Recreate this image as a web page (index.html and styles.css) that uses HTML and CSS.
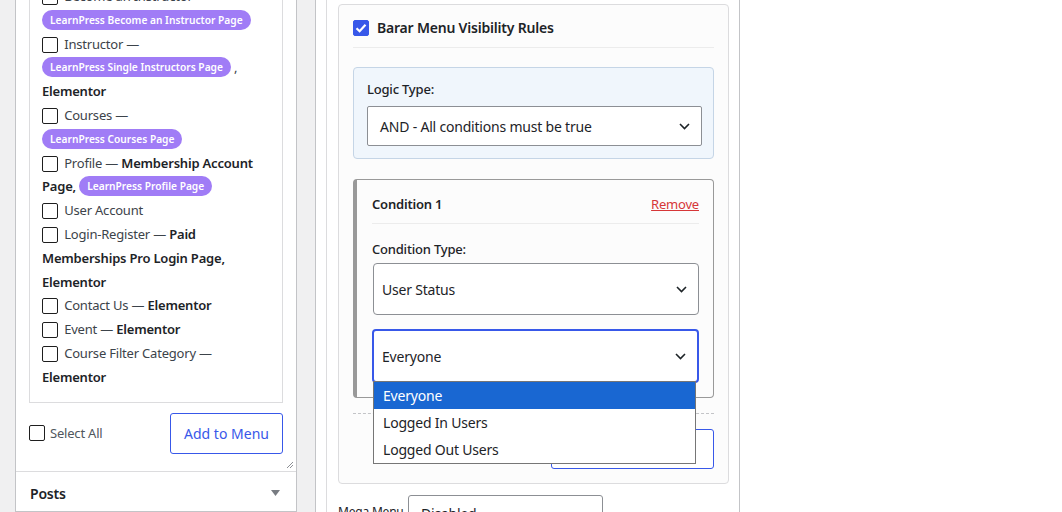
FILE: index.html
```html
<!DOCTYPE html>
<html lang="en">
<head>
  <meta charset="UTF-8">
  <title>Menus</title>
  <link rel="stylesheet" href="styles.css">
</head>
<body>
  <div class="screen">
    <aside class="side">
      <div class="side-section">
        <div class="page-list">
          <div class="page-item"><span class="box"></span> Become an Instructor —<br><span class="tag">LearnPress Become an Instructor Page</span></div>
          <div class="page-item"><span class="box"></span> Instructor —<br><span class="tag">LearnPress Single Instructors Page</span> ,<br><b>Elementor</b></div>
          <div class="page-item"><span class="box"></span> Courses —<br><span class="tag">LearnPress Courses Page</span></div>
          <div class="page-item"><span class="box"></span> Profile — <b>Membership Account<br>Page,</b> <span class="tag">LearnPress Profile Page</span></div>
          <div class="page-item"><span class="box"></span> User Account</div>
          <div class="page-item"><span class="box"></span> Login-Register — <b>Paid<br>Memberships Pro Login Page,<br>Elementor</b></div>
          <div class="page-item"><span class="box"></span> Contact Us — <b>Elementor</b></div>
          <div class="page-item"><span class="box"></span> Event — <b>Elementor</b></div>
          <div class="page-item"><span class="box"></span> Course Filter Category —<br><b>Elementor</b></div>
        </div>
        <div class="side-actions">
          <label class="select-all"><span class="box"></span> Select All</label>
          <button class="btn-outline add-menu">Add to Menu</button>
        </div>
        <svg class="grip" width="8" height="8" viewBox="0 0 8 8" aria-hidden="true">
          <path d="M1 7L7 1M4 7L7 4" stroke="#8c8f94" stroke-width="1"/>
        </svg>
      </div>
      <div class="side-head">
        <span>Posts</span>
        <svg width="9" height="6" viewBox="0 0 9 6" aria-hidden="true"><path d="M0 0H9L4.5 6Z" fill="#787c82"/></svg>
      </div>
    </aside>

    <main class="main">
      <div class="item-settings">
        <section class="rules-card">
          <header class="rules-head">
            <span class="box checked">
              <svg width="12" height="10" viewBox="0 0 12 10" aria-hidden="true"><path d="M1.5 5.2L4.6 8.2L10.5 1.8" fill="none" stroke="#fff" stroke-width="2.2"/></svg>
            </span>
            <span class="rules-title">Barar Menu Visibility Rules</span>
          </header>

          <div class="logic-box">
            <div class="field-label">Logic Type:</div>
            <div class="select logic-select">
              <span>AND - All conditions must be true</span>
              <svg class="chev" width="11" height="7" viewBox="0 0 11 7" aria-hidden="true"><path d="M1 1L5.5 5.5L10 1" fill="none" stroke="#1d2327" stroke-width="1.6"/></svg>
            </div>
          </div>

          <div class="condition">
            <div class="condition-head">
              <span class="condition-title">Condition 1</span>
              <a class="remove" href="#">Remove</a>
            </div>
            <div class="field-label cond-label">Condition Type:</div>
            <div class="select tall">
              <span>User Status</span>
              <svg class="chev" width="11" height="7" viewBox="0 0 11 7" aria-hidden="true"><path d="M1 1L5.5 5.5L10 1" fill="none" stroke="#1d2327" stroke-width="1.6"/></svg>
            </div>
            <div class="select tall focused">
              <span>Everyone</span>
              <svg class="chev" width="11" height="7" viewBox="0 0 11 7" aria-hidden="true"><path d="M1 1L5.5 5.5L10 1" fill="none" stroke="#1d2327" stroke-width="1.6"/></svg>
              <ul class="options">
                <li class="active">Everyone</li>
                <li>Logged In Users</li>
                <li>Logged Out Users</li>
              </ul>
            </div>
          </div>

          <div class="condition-foot">
            <button class="btn-outline add-condition">+ Add Condition</button>
          </div>
        </section>

        <div class="mega-row">
          <span class="mega-label">Mega Menu</span>
          <div class="select mega-select"><span>Disabled</span></div>
        </div>
      </div>
    </main>
  </div>
</body>
</html>
```

FILE: styles.css
```css
:root { --wp-blue: #3858e9; --line: #dcdcde; --frame: #c3c4c7; --ink: #1d2327; --text: #3c434a; --tag: #a07cf6; }
html, body { margin: 0; height: 100%; overflow: hidden; }
body { font-family: "Noto Sans", "Open Sans", sans-serif; font-size: 13px; letter-spacing: -0.2px; color: var(--text); background: #f0f0f1; }
b { font-weight: 600; color: var(--ink); }

.screen { display: flex; align-items: flex-start; padding-left: 15px; height: 100%; }

/* left column: pages accordion */
.side { width: 282px; flex: none; background: #fff; border: 1px solid var(--frame); border-top: 0; height: 100%; box-sizing: border-box; }
.side-section { position: relative; padding: 0 13px 17px; border-bottom: 1px solid var(--line); }
.page-list { margin-top: -16px; border: 1px solid var(--line); padding: 0 12px 12px; line-height: 23.8px; }
.page-item { white-space: nowrap; }
.box { display: inline-block; width: 14px; height: 14px; border: 1px solid #1e1e1e; border-radius: 2px; background: #fff; vertical-align: -4px; margin-right: 3px; }
.box.checked { background: var(--wp-blue); border-color: var(--wp-blue); display: inline-flex; align-items: center; justify-content: center; }
.tag { display: inline-block; background: var(--tag); color: #fff; font-size: 10.2px; font-weight: 600; letter-spacing: 0; line-height: 20px; padding: 0 8px; border-radius: 10px; vertical-align: 1px; }

.side-actions { display: flex; align-items: center; justify-content: space-between; margin-top: 10px; }
.select-all { display: flex; align-items: center; gap: 5px; color: #50575e; }
.select-all .box { margin: 0; vertical-align: 0; }
.btn-outline { font: inherit; background: #fff; color: var(--wp-blue); border: 1px solid var(--wp-blue); border-radius: 3px; cursor: pointer; }
.add-menu { width: 113px; height: 41px; font-size: 14px; }
.grip { position: absolute; right: 2px; bottom: 2px; }

.side-head { display: flex; align-items: center; justify-content: space-between; padding: 0 16px 0 14px; height: 43px; font-size: 14px; font-weight: 600; color: var(--ink); }

/* right column: menu item settings */
.main { flex: 1; margin-left: 18px; height: 100%; background: #fff; border-left: 1px solid var(--frame); padding-left: 10px; }
.item-settings { width: 391px; height: 100%; border-left: 1px solid var(--line); border-right: 1px solid var(--frame); padding: 4px 10px 0 11px; }

.rules-card { background: #fcfcfc; border: 1px solid var(--line); border-radius: 4px; padding: 14px; }
.rules-head { display: flex; align-items: center; gap: 8px; line-height: 18px; padding-bottom: 10px; border-bottom: 1px solid #ececec; }
.rules-head .box { margin: 0; }
.rules-title { font-size: 14px; font-weight: 600; color: var(--ink); }

.logic-box { margin-top: 19px; background: #f0f6fc; border: 1px solid #c5d5e6; border-radius: 4px; padding: 12px 11px 12px 13px; }
.field-label { font-size: 13px; font-weight: 500; color: var(--ink); line-height: 18px; margin-bottom: 8px; }

.select { position: relative; display: flex; align-items: center; justify-content: space-between; background: #fff; border: 1px solid #8c8f94; border-radius: 3px; font-size: 14px; color: var(--ink); box-sizing: border-box; }
.logic-select { height: 40px; padding: 0 11px 0 12px; border-radius: 2px; }
.chev { flex: none; }

.condition { margin-top: 20px; border: 1px solid #999; border-left-width: 4px; border-radius: 4px; padding: 15px 14px 14px 15px; }
.condition-head { display: flex; justify-content: space-between; align-items: center; line-height: 18px; padding-bottom: 10px; border-bottom: 1px solid #ececec; }
.condition-title { font-weight: 600; color: var(--ink); }
.remove { color: #d63638; }
.cond-label { margin: 16px 0 5px; }
.select.tall { height: 52px; padding: 0 11px 0 8px; margin-left: 1px; border-radius: 4px; }
.select.focused { height: 54px; margin-top: 14px; margin-left: 0; border: 2px solid var(--wp-blue); padding-left: 8px; padding-right: 11px; }

.options { position: absolute; left: -1px; right: 1px; top: 100%; margin: 0; padding: 0; list-style: none; background: #fff; border: 1px solid #767676; z-index: 5; }
.options li { height: 27px; line-height: 27px; padding-left: 9px; color: var(--ink); }
.options li.active { background: #1967d2; color: #fff; }

.condition-foot { margin-top: 15px; border-top: 1px dashed var(--frame); padding-top: 15px; display: flex; justify-content: flex-end; }
.add-condition { width: 163px; height: 40px; font-size: 13px; }

.mega-row { display: flex; align-items: flex-start; margin-top: 11px; }
.mega-label { width: 70px; flex: none; white-space: nowrap; padding-top: 8px; font-size: 12px; color: var(--ink); }
.mega-select { width: 195px; height: 36px; padding: 0 12px; border-radius: 3px; }
```
